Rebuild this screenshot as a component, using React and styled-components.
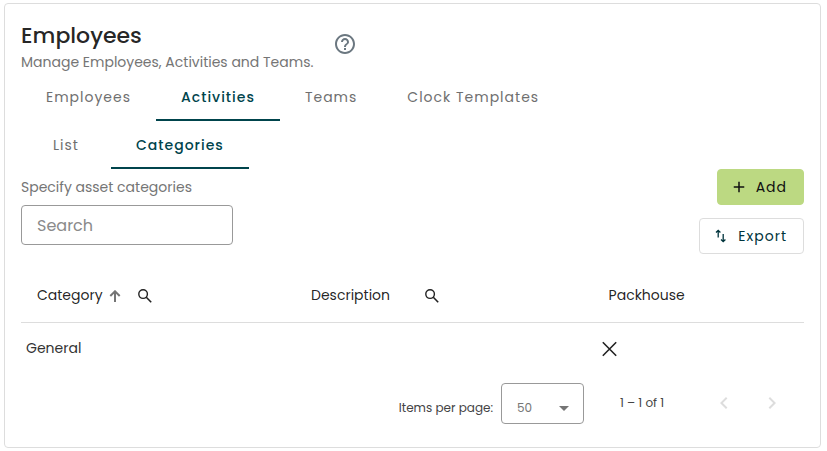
import { useState } from "react";
import styled, { createGlobalStyle } from "styled-components";
import {
  MdAdd,
  MdArrowDropDown,
  MdChevronLeft,
  MdChevronRight,
  MdHelpOutline,
} from "react-icons/md";

const rows = [{ category: "General", description: "", packhouse: false }];

const App = () => {
  const [section, setSection] = useState("Activities");
  const [view, setView] = useState("Categories");
  const [search, setSearch] = useState("");

  const visible = rows.filter((row) =>
    row.category.toLowerCase().includes(search.toLowerCase())
  );

  return (
    <>
      <GlobalStyle />
      <Card>
        <Header>
          <div>
            <Title>Employees</Title>
            <Subtitle>Manage Employees, Activities and Teams.</Subtitle>
          </div>
          <HelpButton aria-label="Help">
            <MdHelpOutline />
          </HelpButton>
        </Header>

        <Tabs role="tablist">
          {["Employees", "Activities", "Teams", "Clock Templates"].map((name) => (
            <Tab
              key={name}
              role="tab"
              aria-selected={section === name}
              $active={section === name}
              onClick={() => setSection(name)}
            >
              {name}
            </Tab>
          ))}
        </Tabs>
        <Tabs role="tablist">
          {["List", "Categories"].map((name) => (
            <Tab
              key={name}
              role="tab"
              aria-selected={view === name}
              $active={view === name}
              onClick={() => setView(name)}
            >
              {name}
            </Tab>
          ))}
        </Tabs>

        <Toolbar>
          <SearchField>
            <SearchLabel htmlFor="search">Specify asset categories</SearchLabel>
            <SearchInput
              id="search"
              placeholder="Search"
              value={search}
              onChange={(e) => setSearch(e.target.value)}
            />
          </SearchField>
          <Actions>
            <Button $primary>
              <MdAdd />
              Add
            </Button>
            <Button>
              <SwapIcon />
              Export
            </Button>
          </Actions>
        </Toolbar>

        <Table>
          <thead>
            <tr>
              <HeadCell $width="35%">
                <HeadContent>
                  Category
                  <SortIcon />
                  <IconButton aria-label="Search category">
                    <SearchIcon />
                  </IconButton>
                </HeadContent>
              </HeadCell>
              <HeadCell $width="38%">
                <HeadContent>
                  Description
                  <SortIcon $hidden />
                  <IconButton aria-label="Search description">
                    <SearchIcon />
                  </IconButton>
                </HeadContent>
              </HeadCell>
              <HeadCell>Packhouse</HeadCell>
            </tr>
          </thead>
          <tbody>
            {visible.map((row) => (
              <tr key={row.category}>
                <Cell>{row.category}</Cell>
                <Cell>{row.description}</Cell>
                <Cell>{!row.packhouse && <CrossIcon />}</Cell>
              </tr>
            ))}
          </tbody>
        </Table>

        <Paginator>
          <PageSize>
            <label htmlFor="size">Items per page:</label>
            <SelectWrap>
              <Select id="size" defaultValue="50">
                <option>10</option>
                <option>25</option>
                <option>50</option>
              </Select>
              <MdArrowDropDown />
            </SelectWrap>
          </PageSize>
          <Range>1 – 1 of 1</Range>
          <PageButton aria-label="Previous page" disabled>
            <MdChevronLeft />
          </PageButton>
          <PageButton aria-label="Next page" disabled>
            <MdChevronRight />
          </PageButton>
        </Paginator>
      </Card>
    </>
  );
};

const SwapIcon = () => (
  <svg viewBox="0 0 18 18" fill="none" stroke="currentColor" strokeWidth="1.3">
    <path d="M6.2 10.5V3.5M4 5.5l2.2-2.2 2.2 2.2" />
    <path d="M11.2 7v7.5M9 12.5l2.2 2.2 2.2-2.2" />
  </svg>
);

const SearchIcon = () => (
  <svg width="18" height="18" viewBox="0 0 18 18" fill="none" stroke="currentColor">
    <circle cx="7.1" cy="7.1" r="4.3" strokeWidth="1.4" />
    <path d="M10.3 10.3l4.9 4.9" strokeWidth="1.6" />
  </svg>
);

const CrossIcon = () => (
  <svg viewBox="0 0 24 24" stroke="#222" strokeWidth="1.6" role="img" aria-label="No">
    <path d="M4.8 5.3l13.4 13.4M18.2 5.3L4.8 18.7" />
  </svg>
);

const SortIcon = ({ $hidden }) => (
  <SortSvg $hidden={$hidden} viewBox="0 0 12 12">
    <path d="M6 12V1.5M1.3 6L6 1.3 10.7 6" />
  </SortSvg>
);

const GlobalStyle = createGlobalStyle`
  * {
    box-sizing: border-box;
  }
  body {
    margin: 3px 6px 3px 4px;
    background: #fff;
    color: rgba(0, 0, 0, 0.87);
    font-family: Poppins, Inter, sans-serif;
    font-size: 14px;
  }
  button, input, select {
    font-family: inherit;
  }
  button {
    cursor: pointer;
  }
`;

const Card = styled.main`
  padding: 16px;
  border: 1px solid #ddd;
  border-radius: 4px;
`;

const Header = styled.header`
  display: flex;
  align-items: center;
  gap: 20px;
  padding-bottom: 1px;
`;

const Title = styled.h1`
  margin: 0;
  font-size: 22px;
  font-weight: 500;
  line-height: 32px;
`;

const Subtitle = styled.p`
  margin: 0;
  color: #757575;
  line-height: 20px;
`;

const HelpButton = styled.button`
  display: flex;
  padding: 0 0 4px;
  border: none;
  background: none;
  color: #6b7780;
  font-size: 24px;
`;

const Tabs = styled.div`
  display: flex;
  height: 48px;
`;

const Tab = styled.button`
  min-width: 90px;
  padding: 2px 25px 0;
  border: none;
  border-bottom: 2px solid ${(props) => (props.$active ? "#00444c" : "transparent")};
  background: none;
  color: ${(props) => (props.$active ? "#00444c" : "#6f6f6f")};
  font-size: 14px;
  font-weight: ${(props) => (props.$active ? 500 : 400)};
  letter-spacing: 1px;
`;

const Toolbar = styled.div`
  display: flex;
  justify-content: space-between;
  margin-bottom: 12px;
`;

const SearchField = styled.div`
  display: flex;
  flex-direction: column;
`;

const SearchLabel = styled.label`
  color: #757575;
  line-height: 36px;
`;

const SearchInput = styled.input`
  width: 212px;
  height: 40px;
  padding: 0 15px;
  border: 1px solid #999;
  border-radius: 4px;
  font-size: 16px;
  &::placeholder {
    color: #8a8a8a;
  }
`;

const Actions = styled.div`
  display: flex;
  flex-direction: column;
  align-items: flex-end;
  gap: 13px;
`;

const Button = styled.button`
  display: flex;
  align-items: center;
  gap: 8px;
  height: 36px;
  padding: 0 16px 0 12px;
  border: 1px solid ${(props) => (props.$primary ? "#bcd982" : "#ddd")};
  border-radius: 4px;
  background: ${(props) => (props.$primary ? "#bcd982" : "#fff")};
  color: ${(props) => (props.$primary ? "#111" : "#00343c")};
  font-size: 14px;
  letter-spacing: 1px;
  svg {
    width: 18px;
    height: 18px;
  }
`;

const Table = styled.table`
  width: 100%;
  border-collapse: collapse;
  table-layout: fixed;
`;

const HeadCell = styled.th`
  width: ${(props) => props.$width || "auto"};
  height: 56px;
  padding: 4px 16px 0;
  border-bottom: 1px solid #ddd;
  font-weight: 400;
  text-align: left;
`;

const HeadContent = styled.div`
  display: flex;
  align-items: center;
`;

const SortSvg = styled.svg`
  width: 12px;
  height: 12px;
  margin: 0 15px 0 6px;
  fill: none;
  stroke: #757575;
  stroke-width: 2;
  visibility: ${(props) => (props.$hidden ? "hidden" : "visible")};
`;

const IconButton = styled.button`
  display: flex;
  padding: 0;
  border: none;
  background: none;
  color: #222;
`;

const Cell = styled.td`
  height: 53px;
  padding: 0 5px;
  color: #333;
  svg {
    display: block;
    width: 24px;
    height: 24px;
  }
`;

const Paginator = styled.div`
  display: flex;
  align-items: center;
  justify-content: flex-end;
  height: 56px;
  padding-right: 8px;
  color: #444;
  font-size: 12px;
`;

const PageSize = styled.div`
  display: flex;
  align-items: baseline;
  gap: 8px;
`;

const SelectWrap = styled.div`
  position: relative;
  svg {
    position: absolute;
    top: 13px;
    right: 8px;
    width: 24px;
    height: 24px;
    color: #757575;
    pointer-events: none;
  }
`;

const Select = styled.select`
  width: 83px;
  height: 41px;
  padding: 8px 15px 0;
  border: 1px solid #999;
  border-radius: 4px;
  background: #fff;
  color: #757575;
  font-size: 12px;
  appearance: none;
`;

const Range = styled.div`
  min-width: 48px;
  margin: 0 32px 0 36px;
`;

const PageButton = styled.button`
  display: flex;
  align-items: center;
  justify-content: center;
  width: 48px;
  height: 48px;
  padding: 0;
  border: none;
  background: none;
  color: #ddd;
  font-size: 24px;
`;

export default App;
